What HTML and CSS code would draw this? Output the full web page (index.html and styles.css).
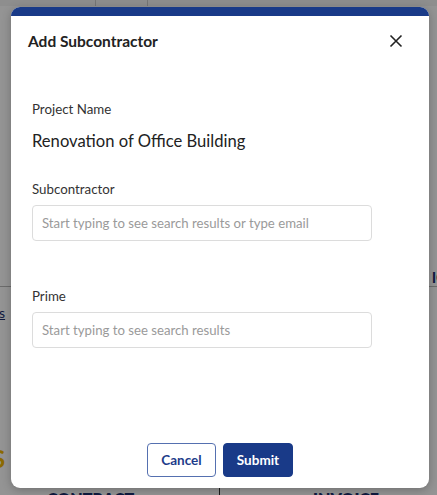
FILE: index.html
```html
<!DOCTYPE html>
<html>
<head>
<meta charset="utf-8">
<link rel="stylesheet" href="styles.css">
</head>
<body>
<div class="page">
  <div class="topbar"><span class="tb-cell a"></span><span class="tb-cell b"></span></div>
  <div class="row-ic"><span class="ic">IC</span></div>
  <div class="rule"></div>
  <div class="row-rs"><span class="rs">rs</span></div>
  <div class="row-s"><span class="ys">S</span></div>
  <div class="bottom">
    <div class="bcell">CONTRACT:</div>
    <div class="bcell right">INVOICE:</div>
  </div>
</div>
<div class="overlay"></div>
<div class="modal">
  <div class="band"></div>
  <div class="header">
    <h2 class="title">Add Subcontractor</h2>
    <button class="close" aria-label="Close">
      <svg width="14" height="14" viewBox="0 0 14 14"><path d="M1.5 1.5 L12.5 12.5 M12.5 1.5 L1.5 12.5" stroke="#222" stroke-width="1.6" fill="none"/></svg>
    </button>
  </div>
  <div class="body">
    <div class="label">Project Name</div>
    <div class="value">Renovation of Office Building</div>
    <div class="label l2">Subcontractor</div>
    <input class="field" placeholder="Start typing to see search results or type email">
    <div class="label l3">Prime</div>
    <input class="field" placeholder="Start typing to see search results">
  </div>
  <div class="footer">
    <button class="btn cancel">Cancel</button>
    <button class="btn submit">Submit</button>
  </div>
</div>
</body>
</html>
```
FILE: styles.css
```css
* { box-sizing: border-box; }
html, body { margin: 0; padding: 0; }
body {
  width: 437px;
  height: 495px;
  overflow: hidden;
  font-family: Lato, "Open Sans", sans-serif;
  background: #fff;
  position: relative;
}
.page {
  display: grid;
  grid-template-rows: 6px 280px 2px 140px 60px 7px;
  height: 495px;
}
.topbar { display: flex; background: #f4f4f4; }
.tb-cell { border-right: 1px solid #ccc; }
.tb-cell.a { width: 96px; }
.tb-cell.b { width: 52px; }
.row-ic { display: flex; justify-content: flex-end; align-items: flex-end; }
.ic { color: #1b2f6e; font-weight: 700; font-size: 15px; margin-right: -6px; }
.rule { border-top: 1px solid #bbb; }
.row-rs { padding-top: 14px; }
.rs { color: #1b2f6e; text-decoration: underline; font-size: 14px; margin-left: -6px; }
.row-s { display: flex; align-items: center; }
.ys { color: #f2b705; font-weight: 700; font-size: 24px; margin-left: -8px; }
.bottom { display: flex; }
.bcell { width: 220px; border-right: 1px solid #333; color: #1b2f6e; font-weight: 800; font-size: 16px; padding-left: 47px; line-height: 22px; }
.bcell.right { border-right: none; padding-left: 93px; }
.overlay {
  position: absolute;
  inset: 0;
  background: rgba(0, 0, 0, 0.42);
}
.modal {
  position: absolute;
  left: 11px;
  top: 7px;
  width: 418px;
  height: 481px;
  background: #fff;
  border-radius: 9px;
  overflow: hidden;
  display: flex;
  flex-direction: column;
  box-shadow: 0 2px 10px rgba(0, 0, 0, 0.25);
}
.band { height: 9px; background: #193a88; flex: none; }
.header {
  height: 50px;
  display: flex;
  align-items: center;
  justify-content: space-between;
  padding: 0 26px 0 17px;
  flex: none;
}
.title {
  margin: 0;
  font-size: 15.5px;
  font-weight: 700;
  color: #222;
}
.close {
  border: none;
  background: none;
  padding: 0;
  width: 14px;
  height: 14px;
  display: flex;
}
.body {
  padding: 33px 0 0 21px;
  display: flex;
  flex-direction: column;
  align-items: flex-start;
}
.label {
  font-size: 13.3px;
  line-height: 20px;
  color: #333;
}
.value {
  margin-top: 10px;
  font-size: 16.6px;
  line-height: 24px;
  color: #222;
}
.l2 { margin-top: 26px; }
.l3 { margin-top: 45px; }
.field {
  margin-top: 6px;
  width: 340px;
  height: 36px;
  border: 1px solid #dcdcdc;
  border-radius: 4px;
  padding: 0 9px;
  font-family: Lato, sans-serif;
  font-size: 13.2px;
  color: #333;
  outline: none;
}
.field::placeholder { color: #9a9a9a; }
.footer {
  margin-top: auto;
  display: flex;
  justify-content: center;
  gap: 7px;
  padding-bottom: 11px;
}
.btn {
  height: 34px;
  border-radius: 4px;
  font-family: Lato, sans-serif;
  font-size: 13.5px;
  font-weight: 700;
  padding: 0;
}
.cancel {
  width: 69px;
  background: #fff;
  color: #1d3b8a;
  border: 1px solid #5570b0;
}
.submit {
  width: 70px;
  background: #193a88;
  color: #fff;
  border: 1px solid #193a88;
}
```
